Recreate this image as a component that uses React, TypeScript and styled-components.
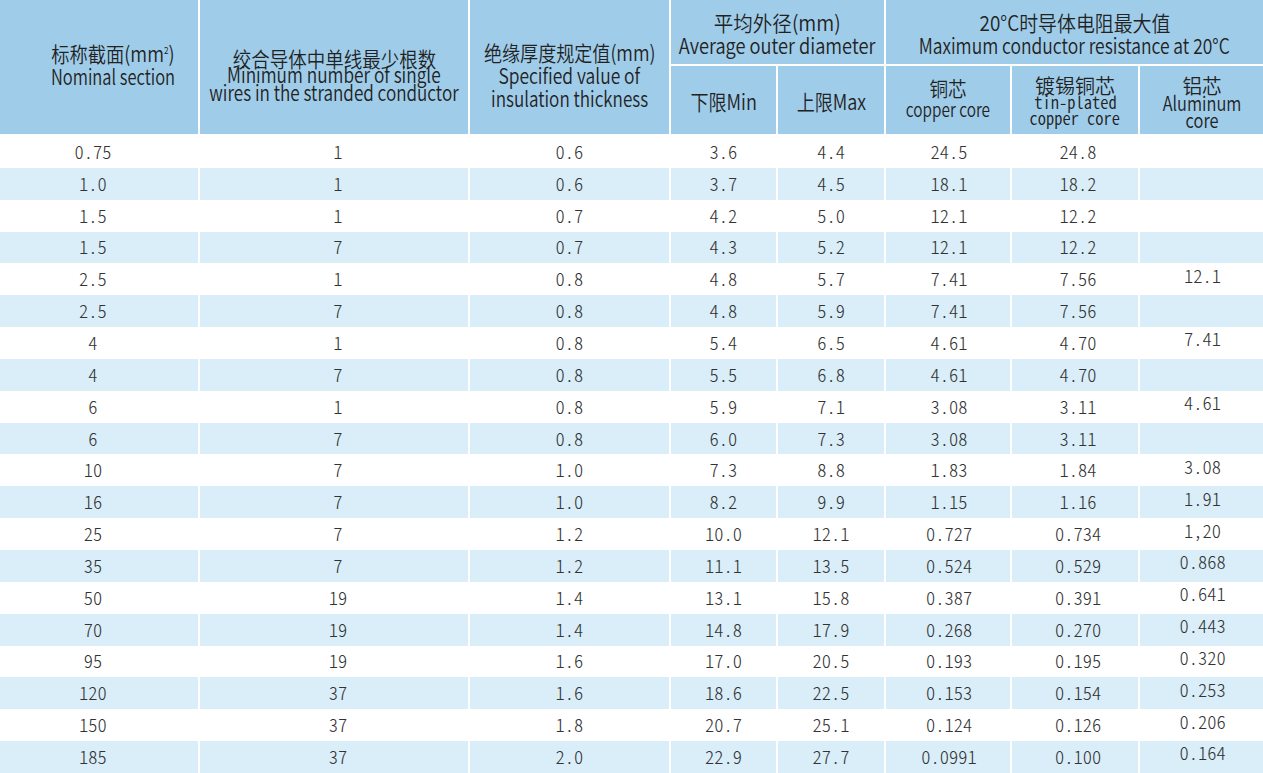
import React from "react";
import styled, { createGlobalStyle } from "styled-components";

const GlobalStyle = createGlobalStyle`
  html, body { margin: 0; padding: 0; background: #ffffff; }
  body { font-family: "Noto Sans CJK SC", "Noto Sans", sans-serif; }
`;

const HEAD_BG = "#9fcce9";
const STRIPE_BG = "#d9eef9";
const HALF_WIDTH = `"Noto Sans CJK SC", "Noto Sans Mono CJK SC", "DejaVu Sans Mono", monospace`;
const WEIGHT = 350;

const Table = styled.table`
  width: 1263px;
  border-collapse: separate;
  border-spacing: 0;
  table-layout: fixed;
`;

const Col = styled.col<{ $w: number }>`
  width: ${(p) => p.$w}px;
`;

const HeadRow = styled.tr<{ $h: number }>`
  height: ${(p) => p.$h}px;
`;

const HeadCell = styled.th<{ $last?: boolean }>`
  background: ${HEAD_BG};
  border-right: ${(p) => (p.$last ? "0" : "2px solid #ffffff")};
  border-bottom: 2px solid #ffffff;
  padding: 0;
  vertical-align: middle;
  text-align: center;
  font-family: "Noto Sans CJK SC", "Noto Sans", sans-serif;
  font-weight: ${WEIGHT};
  color: #222222;
`;

const HeadInner = styled.div<{ $pt?: number; $pb?: number; $pl?: number }>`
  display: flex;
  flex-direction: column;
  align-items: center;
  padding: ${(p) => p.$pt ?? 0}px 0 ${(p) => p.$pb ?? 0}px ${(p) => p.$pl ?? 0}px;
`;

const Line = styled.span<{ $size: number; $lh: number; $sx: number; $mono?: boolean; $mt?: number }>`
  display: block;
  white-space: nowrap;
  margin-top: ${(p) => p.$mt ?? 0}px;
  font-size: ${(p) => p.$size}px;
  line-height: ${(p) => p.$lh}px;
  font-weight: ${WEIGHT};
  transform: scaleX(${(p) => p.$sx});
  transform-origin: center;
  font-family: ${(p) => (p.$mono ? HALF_WIDTH : `"Noto Sans CJK SC", "Noto Sans", sans-serif`)};
  font-feature-settings: ${(p) => (p.$mono ? `"hwid"` : "normal")};
`;

const Sup = styled.sup`
  font-size: 0.45em;
  vertical-align: 0.9em;
  line-height: 0;
`;

const DataRow = styled.tr<{ $striped: boolean }>`
  height: 31.85px;
  background: ${(p) => (p.$striped ? STRIPE_BG : "#ffffff")};
`;

const DataCell = styled.td<{ $last?: boolean; $lift?: boolean; $shift?: number }>`
  border-right: ${(p) => (p.$last ? "0" : "2px solid #ffffff")};
  padding: 0 ${(p) => Math.max(0, -(p.$shift ?? 0))}px ${(p) => (p.$lift ? 9 : 2)}px
    ${(p) => Math.max(0, p.$shift ?? 0)}px;
  text-align: center;
  vertical-align: middle;
  font-family: ${HALF_WIDTH};
  font-feature-settings: "hwid";
  font-weight: 300;
  font-size: 18.5px;
  line-height: 20px;
  color: #333333;
`;

const widths = [200, 270, 201, 107, 108, 126, 128, 123];
const shifts = [-12, 8, 0, 0, 0, 2, 6, 2];

const rows: string[][] = [
  ["0.75", "1", "0.6", "3.6", "4.4", "24.5", "24.8", ""],
  ["1.0", "1", "0.6", "3.7", "4.5", "18.1", "18.2", ""],
  ["1.5", "1", "0.7", "4.2", "5.0", "12.1", "12.2", ""],
  ["1.5", "7", "0.7", "4.3", "5.2", "12.1", "12.2", ""],
  ["2.5", "1", "0.8", "4.8", "5.7", "7.41", "7.56", "12.1"],
  ["2.5", "7", "0.8", "4.8", "5.9", "7.41", "7.56", ""],
  ["4", "1", "0.8", "5.4", "6.5", "4.61", "4.70", "7.41"],
  ["4", "7", "0.8", "5.5", "6.8", "4.61", "4.70", ""],
  ["6", "1", "0.8", "5.9", "7.1", "3.08", "3.11", "4.61"],
  ["6", "7", "0.8", "6.0", "7.3", "3.08", "3.11", ""],
  ["10", "7", "1.0", "7.3", "8.8", "1.83", "1.84", "3.08"],
  ["16", "7", "1.0", "8.2", "9.9", "1.15", "1.16", "1.91"],
  ["25", "7", "1.2", "10.0", "12.1", "0.727", "0.734", "1,20"],
  ["35", "7", "1.2", "11.1", "13.5", "0.524", "0.529", "0.868"],
  ["50", "19", "1.4", "13.1", "15.8", "0.387", "0.391", "0.641"],
  ["70", "19", "1.4", "14.8", "17.9", "0.268", "0.270", "0.443"],
  ["95", "19", "1.6", "17.0", "20.5", "0.193", "0.195", "0.320"],
  ["120", "37", "1.6", "18.6", "22.5", "0.153", "0.154", "0.253"],
  ["150", "37", "1.8", "20.7", "25.1", "0.124", "0.126", "0.206"],
  ["185", "37", "2.0", "22.9", "27.7", "0.0991", "0.100", "0.164"],
];

export default function App() {
  return (
    <>
      <GlobalStyle />
      <Table>
        <colgroup>
          {widths.map((w, i) => (
            <Col key={i} $w={w} />
          ))}
        </colgroup>
        <thead>
          <HeadRow $h={66}>
            <HeadCell rowSpan={2}>
              <HeadInner $pl={28} $pb={5}>
                <Line $size={21} $lh={23} $sx={0.87}>
                  标称截面(mm<Sup>2</Sup>)
                </Line>
                <Line $size={21} $lh={23} $sx={0.785}>
                  Nominal section
                </Line>
              </HeadInner>
            </HeadCell>
            <HeadCell rowSpan={2}>
              <HeadInner $pt={15}>
                <Line $size={21} $lh={18} $sx={0.88}>
                  绞合导体中单线最少根数
                </Line>
                <Line $size={21} $lh={18} $sx={0.822} $mt={-2}>
                  Minimum number of single
                </Line>
                <Line $size={21} $lh={18} $sx={0.815}>
                  wires in the stranded conductor
                </Line>
              </HeadInner>
            </HeadCell>
            <HeadCell rowSpan={2}>
              <HeadInner $pt={16}>
                <Line $size={21} $lh={23} $sx={0.86}>
                  绝缘厚度规定值(mm)
                </Line>
                <Line $size={21} $lh={23} $sx={0.831}>
                  Specified value of
                </Line>
                <Line $size={21} $lh={23} $sx={0.813}>
                  insulation thickness
                </Line>
              </HeadInner>
            </HeadCell>
            <HeadCell colSpan={2}>
              <HeadInner $pt={3}>
                <Line $size={21} $lh={23} $sx={0.93}>
                  平均外径(mm)
                </Line>
                <Line $size={21} $lh={23} $sx={0.869}>
                  Average outer diameter
                </Line>
              </HeadInner>
            </HeadCell>
            <HeadCell colSpan={3} $last>
              <HeadInner $pt={3}>
                <Line $size={21} $lh={23} $sx={0.9}>
                  20°C时导体电阻最大值
                </Line>
                <Line $size={21} $lh={23} $sx={0.831}>
                  Maximum conductor resistance at 20°C
                </Line>
              </HeadInner>
            </HeadCell>
          </HeadRow>
          <HeadRow $h={70}>
            <HeadCell>
              <HeadInner $pt={2}>
                <Line $size={21} $lh={23} $sx={0.86}>
                  下限Min
                </Line>
              </HeadInner>
            </HeadCell>
            <HeadCell>
              <HeadInner $pt={2}>
                <Line $size={21} $lh={23} $sx={0.86}>
                  上限Max
                </Line>
              </HeadInner>
            </HeadCell>
            <HeadCell>
              <HeadInner $pb={2}>
                <Line $size={20} $lh={20} $sx={0.93}>
                  铜芯
                </Line>
                <Line $size={19} $lh={20} $sx={0.81}>
                  copper core
                </Line>
              </HeadInner>
            </HeadCell>
            <HeadCell>
              <HeadInner $pt={3}>
                <Line $size={20} $lh={17} $sx={1}>
                  镀锡铜芯
                </Line>
                <Line $size={17} $lh={16} $sx={0.97} $mono>
                  tin-plated
                </Line>
                <Line $size={17} $lh={16} $sx={0.97} $mono>
                  copper core
                </Line>
              </HeadInner>
            </HeadCell>
            <HeadCell $last>
              <HeadInner $pt={4}>
                <Line $size={20} $lh={17} $sx={0.98}>
                  铝芯
                </Line>
                <Line $size={20} $lh={17} $sx={0.82}>
                  Aluminum
                </Line>
                <Line $size={20} $lh={17} $sx={0.82}>
                  core
                </Line>
              </HeadInner>
            </HeadCell>
          </HeadRow>
        </thead>
        <tbody>
          {rows.map((r, i) => (
            <DataRow key={i} $striped={i % 2 === 1}>
              {r.map((v, j) => (
                <DataCell
                  key={j}
                  $last={j === r.length - 1}
                  $lift={j === r.length - 1}
                  $shift={shifts[j]}
                >
                  {v}
                </DataCell>
              ))}
            </DataRow>
          ))}
        </tbody>
      </Table>
    </>
  );
}
